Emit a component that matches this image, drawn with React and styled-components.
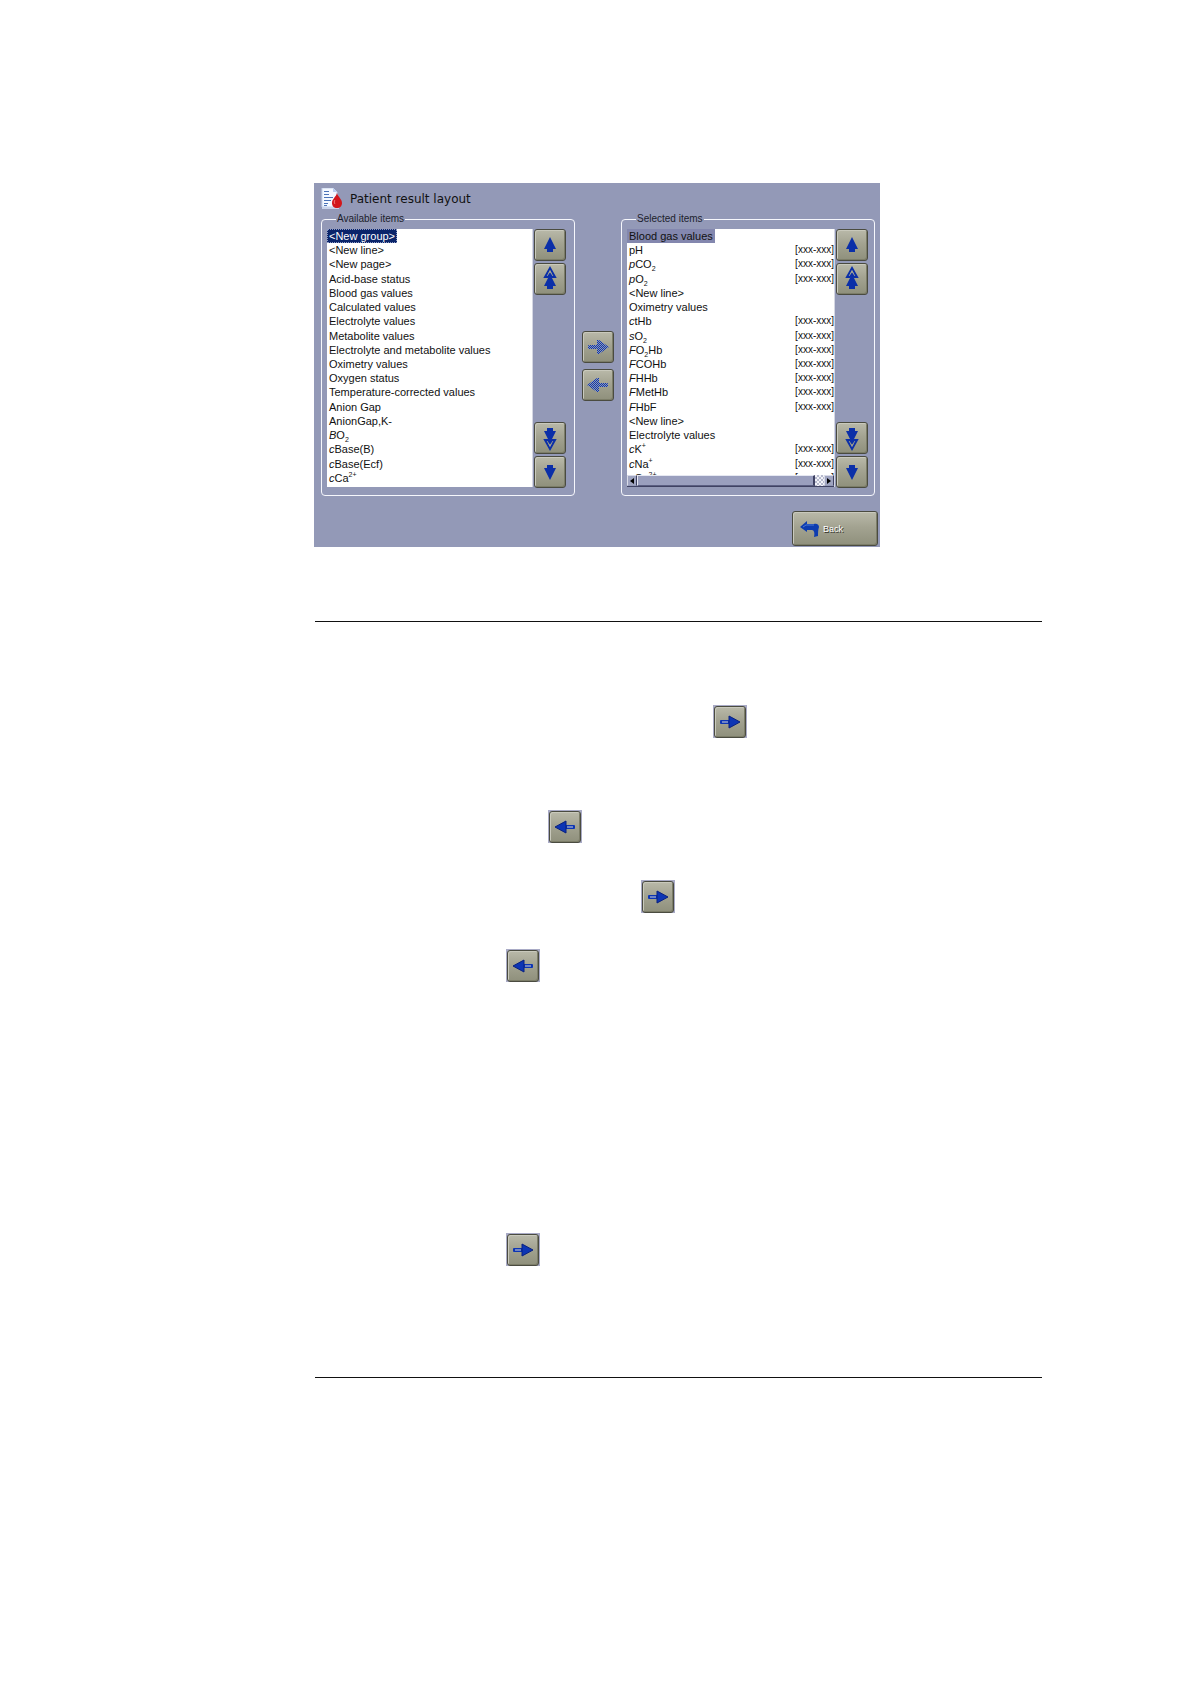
import React from "react";
import styled, { createGlobalStyle, css } from "styled-components";

const availableItems = [
  "<New group>",
  "<New line>",
  "<New page>",
  "Acid-base status",
  "Blood gas values",
  "Calculated values",
  "Electrolyte values",
  "Metabolite values",
  "Electrolyte and metabolite values",
  "Oximetry values",
  "Oxygen status",
  "Temperature-corrected values",
  "Anion Gap",
  "AnionGap,K-",
  { symbol: "B", name: "O", sub: "2" },
  { symbol: "c", name: "Base(B)" },
  { symbol: "c", name: "Base(Ecf)" },
  { symbol: "c", name: "Ca", sup: "2+" }
];

const selectedItems = [
  "Blood gas values",
  { name: "pH", range: true },
  { symbol: "p", name: "CO", sub: "2", range: true },
  { symbol: "p", name: "O", sub: "2", range: true },
  "<New line>",
  "Oximetry values",
  { symbol: "c", name: "tHb", range: true },
  { symbol: "s", name: "O", sub: "2", range: true },
  { symbol: "F", name: "O", sub: "2", tail: "Hb", range: true },
  { symbol: "F", name: "COHb", range: true },
  { symbol: "F", name: "HHb", range: true },
  { symbol: "F", name: "MetHb", range: true },
  { symbol: "F", name: "HbF", range: true },
  "<New line>",
  "Electrolyte values",
  { symbol: "c", name: "K", sup: "+", range: true },
  { symbol: "c", name: "Na", sup: "+", range: true },
  { symbol: "c", name: "Ca", sup: "2+", range: true }
];

const steps = [
  { direction: "right", indent: 399, space: 83 },
  { direction: "left", indent: 234, space: 72 },
  { direction: "right", indent: 327, space: 37 },
  { direction: "left", indent: 192, space: 36 },
  { direction: "right", indent: 192, space: 251 }
];

function ScrollIcon({ down, double }) {
  return (
    <Icon viewBox="0 0 32 32" $flip={down}>
      {double ? (
        <>
          <path
            d="M16 5 L21 14 H18 L16 11 L14 14 H11 Z"
            fill="none"
            stroke="#0b2fa8"
            strokeWidth="2"
          />
          <path d="M16 11 L22 23 H19 V26 H13 V23 H10 Z" fill="#0b2fa8" />
          <path d="M16 7 L18 11 L16 9 L14 11 Z" fill="#a3a391" />
        </>
      ) : (
        <path d="M16 8 L22 20 H19 V23 H13 V20 H10 Z" fill="#0b2fa8" />
      )}
    </Icon>
  );
}

function MoveIcon({ direction, dimmed }) {
  const paint = dimmed ? "url(#dither)" : "#0d35b4";
  return (
    <Icon viewBox="0 0 32 32" $mirror={direction === "left"}>
      <rect x="6" y="14" width="10" height="4" rx="1" fill={paint} />
      {!dimmed && <rect x="8" y="15" width="6" height="2" fill="#6f84c4" />}
      <path
        d={dimmed ? "M15 9 H17 L27 16 L17 23 H15 Z" : "M15 10 L26 16 L15 22 Z"}
        fill={paint}
        stroke={dimmed ? "none" : "#082080"}
        strokeWidth="1"
        strokeLinejoin="round"
      />
    </Icon>
  );
}

function DitherPattern() {
  return (
    <svg width="0" height="0" aria-hidden="true">
      <pattern id="dither" width="2" height="2" patternUnits="userSpaceOnUse">
        <rect width="2" height="2" fill="#8f9bb0" />
        <rect width="1" height="1" fill="#0f34b0" />
        <rect x="1" y="1" width="1" height="1" fill="#0f34b0" />
      </pattern>
    </svg>
  );
}

function ReportIcon() {
  return (
    <svg width="22" height="22" viewBox="0 0 22 22" aria-hidden="true">
      <path d="M1 0 H12 L16 4 V19 H1 Z" fill="#f4f8ff" stroke="#c4d2ec" />
      <path d="M12 0 V4 H16 Z" fill="#b9cdf0" />
      <path
        d="M3 3.5 H8 M3 6.5 H8 M3 9.5 H12 M3 12.5 H10 M3 15.5 H7 M3 17.5 H6"
        stroke="#4a72b8"
      />
      <path d="M1 20 H18" stroke="#c9d3ea" strokeWidth="2" />
      <path
        d="M16 5 C17 9 21 11 21 15 C21 18 19 20 16 20 C13 20 11 18 11 15 C11 11 15 9 16 5 Z"
        fill="#d3161b"
      />
      <path d="M14 12 C13 13 13 15 14 16" stroke="#f0777a" fill="none" />
    </svg>
  );
}

function BackIcon() {
  return (
    <svg width="19" height="16" viewBox="0 0 19 16" aria-hidden="true">
      <path
        d="M0 6 L7 0 V3 H14 C17 2 19 4 19 6 C18 9 18 12 18 15 L14 16 C15 12 14 9 12 9 H7 V11 Z"
        fill="#0d3cb0"
      />
      <path d="M3 6 L6 4 H14" stroke="#4d78d4" fill="none" />
    </svg>
  );
}

function Item({ item, current, focused }) {
  const { symbol, name, sub, sup, tail, range } =
    typeof item === "string" ? { name: item } : item;
  return (
    <Row role="option" aria-selected={current}>
      <Label $current={current} $focused={focused}>
        {symbol && <i>{symbol}</i>}
        {name}
        {sub && <sub>{sub}</sub>}
        {sup && <sup>{sup}</sup>}
        {tail}
      </Label>
      {range && <Range>[xxx-xxx]</Range>}
    </Row>
  );
}

function ItemGroup({ title, items, focused, scrollable }) {
  return (
    <Group $wide={scrollable}>
      <Legend>{title}</Legend>
      <GroupBody>
        <ListBox>
          <Rows role="listbox" aria-label={title}>
            {items.map((item, i) => (
              <Item key={i} item={item} current={i === 0} focused={focused} />
            ))}
          </Rows>
          {scrollable && (
            <ScrollBar>
              <ScrollArrow aria-label="Scroll left">
                <svg width="4" height="6" viewBox="0 0 4 6">
                  <path d="M4 0 V6 L0 3 Z" />
                </svg>
              </ScrollArrow>
              <ScrollThumb />
              <ScrollTrack />
              <ScrollArrow aria-label="Scroll right">
                <svg width="4" height="6" viewBox="0 0 4 6">
                  <path d="M0 0 V6 L4 3 Z" />
                </svg>
              </ScrollArrow>
            </ScrollBar>
          )}
        </ListBox>
        <ScrollButtons>
          <SquareButton aria-label="Up">
            <ScrollIcon />
          </SquareButton>
          <SquareButton aria-label="Page up">
            <ScrollIcon double />
          </SquareButton>
          <Spacer />
          <SquareButton aria-label="Page down">
            <ScrollIcon down double />
          </SquareButton>
          <SquareButton aria-label="Down">
            <ScrollIcon down />
          </SquareButton>
        </ScrollButtons>
      </GroupBody>
    </Group>
  );
}

export default function App() {
  return (
    <>
      <GlobalStyle />
      <Page>
        <Screen>
          <Header>
            <ReportIcon />
            <Title>Patient result layout</Title>
          </Header>
          <Columns>
            <ItemGroup title="Available items" items={availableItems} focused />
            <MoveButtons>
              <SquareButton aria-label="Add item">
                <MoveIcon direction="right" dimmed />
              </SquareButton>
              <SquareButton aria-label="Remove item">
                <MoveIcon direction="left" dimmed />
              </SquareButton>
            </MoveButtons>
            <ItemGroup title="Selected items" items={selectedItems} scrollable />
          </Columns>
          <Footer>
            <BackButton>
              <BackIcon />
              Back
            </BackButton>
          </Footer>
        </Screen>
        <Steps>
          {steps.map(({ direction, indent, space }, i) => (
            <Step key={i} $indent={indent} $space={space}>
              <KeyFrame>
                <SquareButton aria-label={direction === "right" ? "Add" : "Remove"}>
                  <MoveIcon direction={direction} />
                </SquareButton>
              </KeyFrame>
            </Step>
          ))}
        </Steps>
      </Page>
      <DitherPattern />
    </>
  );
}

const GlobalStyle = createGlobalStyle`
  * {
    box-sizing: border-box;
  }
  body {
    margin: 0;
    background: #ffffff;
    font-family: "Liberation Sans", Arial, sans-serif;
    font-size: 11px;
    color: #111111;
  }
  button {
    font-family: inherit;
    cursor: pointer;
  }
`;

const Page = styled.main`
  padding: 183px 148px 120px 314px;
`;

const Screen = styled.section`
  max-width: 566px;
  padding: 2px 5px 1px 7px;
  background: #9399b7;
`;

const Header = styled.header`
  display: flex;
  align-items: center;
  gap: 7px;
  height: 27px;
`;

const Title = styled.h1`
  margin: 0;
  font-family: "DejaVu Sans", Verdana, sans-serif;
  font-size: 12px;
  font-weight: 400;
  line-height: 16px;
`;

const Columns = styled.div`
  display: grid;
  grid-template-columns: 1fr 46px 1fr;
`;

const Group = styled.fieldset`
  min-width: 0;
  margin: 0;
  padding: 3px ${props => (props.$wide ? 6 : 8)}px 7px 5px;
  border: 1px solid #f6f7fc;
  border-radius: 4px;
`;

const Legend = styled.legend`
  margin-left: 9px;
  padding: 0 1px;
  font-size: 10px;
  line-height: 14px;
  color: #1c1e2c;
`;

const GroupBody = styled.div`
  display: flex;
  gap: 1px;
  height: 259px;
`;

const ListBox = styled.div`
  position: relative;
  flex: 1;
  min-width: 0;
  margin-bottom: 1px;
  background: #ffffff;
  border-right: 1px solid #d5d7e3;
  overflow: hidden;
`;

const Rows = styled.ul`
  display: grid;
  grid-auto-rows: 1fr;
  height: 100%;
  margin: 0;
  padding: 0 0 2px;
  list-style: none;
`;

const Row = styled.li`
  display: flex;
  justify-content: space-between;
  line-height: 14px;
  white-space: nowrap;
`;

const Label = styled.span`
  height: 14px;
  padding: 0 2px;
  ${props =>
    props.$current &&
    css`
      background: ${props.$focused ? "#0a246a" : "#8387ae"};
      color: ${props.$focused ? "#ffffff" : "#111111"};
      outline: ${props.$focused ? "1px dotted #8f9cc4" : "none"};
      outline-offset: -1px;
    `}

  sub,
  sup {
    font-size: 7px;
    line-height: 0;
  }
`;

const Range = styled.span`
  font-size: 10px;
`;

const ScrollBar = styled.div`
  position: absolute;
  left: 0;
  right: 0;
  bottom: 0;
  display: flex;
  height: 12px;
  background: #9399b7;
  border-bottom: 1px solid #3f4263;
`;

const ScrollArrow = styled.button`
  display: flex;
  align-items: center;
  justify-content: center;
  width: 10px;
  padding: 0;
  border: 1px solid;
  border-color: #d9dbe8 #3f4263 #9399b7 #d9dbe8;
  background: #9fa4c0;
`;

const ScrollThumb = styled.div`
  flex: 1;
  border: solid;
  border-width: 1px 2px 1px 1px;
  border-color: #e6e8f2 #3f4263 #5b5f82 #e6e8f2;
  background: #9a9fbe;
`;

const ScrollTrack = styled.div`
  width: 9px;
  background: repeating-conic-gradient(#b7bace 0 25%, #f3f4f9 0 50%) 0 0 / 4px 4px;
`;

const ScrollButtons = styled.div`
  display: flex;
  flex-direction: column;
  gap: 2px;
`;

const Spacer = styled.div`
  flex: 1;
`;

const buttonFace = css`
  border: 1px solid #4a4b40;
  border-radius: 3px;
  background: linear-gradient(#b9b9a9, #a3a391 45%, #8f907c);
  box-shadow: inset 1px 1px 0 #c9c9bc, inset -1px -1px 0 #7c7d68;
`;

const SquareButton = styled.button`
  ${buttonFace}
  display: block;
  width: 32px;
  height: 32px;
  padding: 0;
`;

const Icon = styled.svg`
  display: block;
  width: 32px;
  height: 32px;
  margin: -1px;
  transform: ${props =>
    props.$flip ? "scaleY(-1)" : props.$mirror ? "scaleX(-1)" : "none"};
`;

const MoveButtons = styled.div`
  display: flex;
  flex-direction: column;
  align-items: center;
  justify-content: center;
  gap: 6px;
  padding-top: 24px;
`;

const Footer = styled.footer`
  display: flex;
  justify-content: flex-end;
  margin-right: -3px;
  padding-top: 15px;
`;

const BackButton = styled.button`
  ${buttonFace}
  display: flex;
  align-items: center;
  gap: 4px;
  width: 86px;
  height: 35px;
  padding: 0 7px;
  font-size: 9px;
  color: #ffffff;
  text-shadow: 1px 1px 0 #33342b;
`;

const Steps = styled.ol`
  margin: 74px 0 0 1px;
  padding: 0 0 111px;
  border: solid #111111;
  border-width: 1px 0;
  list-style: none;
`;

const Step = styled.li`
  display: flex;
  padding-top: ${props => props.$space}px;
  padding-left: ${props => props.$indent - 1}px;
`;

const KeyFrame = styled.div`
  padding: 1px 1px 0;
  background: #a9abc6;
`;
